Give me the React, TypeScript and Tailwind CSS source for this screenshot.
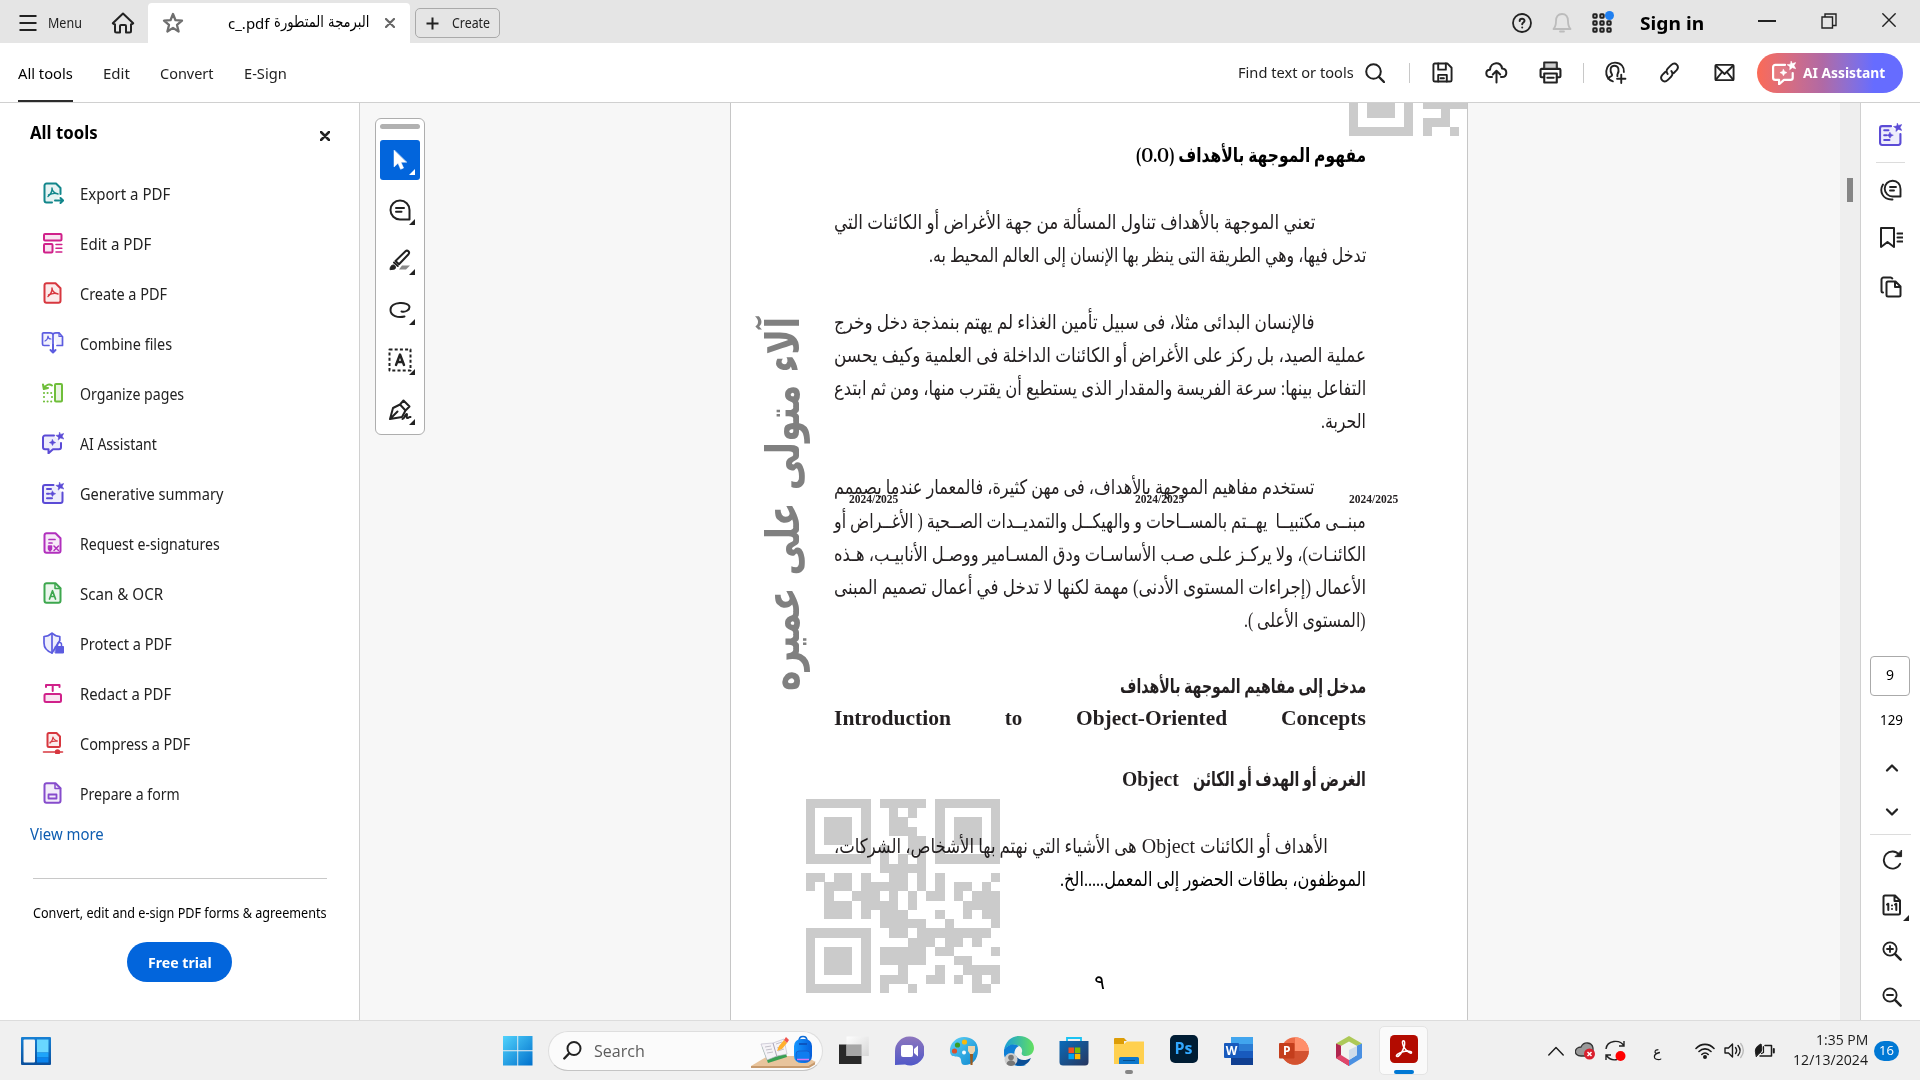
import React, { useLayoutEffect, useRef, useState } from "react";

type FitProps = { w: string; className?: string; children: React.ReactNode; rtl?: boolean };

/* A single line of text whose glyphs are condensed or expanded to the width of its box. */
function Fit({ w, className = "", children, rtl = false }: FitProps) {
  const outer = useRef<HTMLSpanElement>(null);
  const inner = useRef<HTMLSpanElement>(null);
  const [scale, setScale] = useState(1);
  useLayoutEffect(() => {
    if (outer.current && inner.current) {
      setScale(outer.current.clientWidth / inner.current.offsetWidth);
    }
  }, []);
  return (
    <span ref={outer} dir={rtl ? "rtl" : "ltr"} className={`block shrink-0 whitespace-pre ${w} ${className}`}>
      <span
        ref={inner}
        className={`inline-block ${rtl ? "origin-right" : "origin-left"}`}
        style={{ transform: `scaleX(${scale})` }}
      >
        {children}
      </span>
    </span>
  );
}

type IconProps = { children: React.ReactNode; className?: string; sw?: number; box?: string };
function Icon({ children, className = "size-[22px]", sw = 2, box = "0 0 22 22" }: IconProps) {
  return (
    <svg
      viewBox={box}
      className={`shrink-0 ${className}`}
      fill="none"
      stroke="currentColor"
      strokeWidth={sw}
      strokeLinecap="round"
      strokeLinejoin="round"
    >
      {children}
    </svg>
  );
}

const SPARK = "M17.6 0.2l1 2.2 3.2-1-1.6 2.8 1.6 2.9-3.2-1-2.4 2 .2-2.9-2.6-1.8 3-.5z";
const ACRO = "M10 6c.3 3-1 6-4 8.500M10 6c0 3 2 5 6 6M6.500 13c3-1.500 6-2 9-1.300";

function DocIcon({ children }: { children?: React.ReactNode }) {
  return (
    <Icon>
      <path d="M4.500 1.200h9l5 5v12.600a2 2 0 0 1-2 2h-12a2 2 0 0 1-2-2V3.200a2 2 0 0 1 2-2z" fill="currentColor" fillOpacity=".1" />
      {children}
    </Icon>
  );
}

function SummaryIcon({ className = "size-[22px]" }: { className?: string }) {
  return (
    <Icon className={className}>
      <path d="M11.500 3H3a2 2 0 0 0-2 2v14a2 2 0 0 0 2 2h15.500a2 2 0 0 0 2-2v-8.500" fill="currentColor" fillOpacity=".1" />
      <path d="M5 7h4M5 11.700h2M5 16.200h5" />
      <path d="M10.500 9l1 1.700 2.200 1-2.200 1-1 1.800-1-1.800-2-1 2-1z" fill="currentColor" strokeWidth=".5" />
      <path d={SPARK} fill="currentColor" strokeWidth=".5" />
    </Icon>
  );
}

function AssistantIcon({ className = "size-[22px]" }: { className?: string }) {
  return (
    <Icon className={className}>
      <path d="M12 3.500H3a2 2 0 0 0-2 2v9.800a2 2 0 0 0 2 2h3.500v4l4.500-4h6a2 2 0 0 0 2-2V11" fill="currentColor" fillOpacity=".1" />
      <path d="M10.500 7.600l1 2 2.200 1-2.200 1-1 2-1-2-2.200-1 2.200-1z" fill="currentColor" strokeWidth=".5" />
      <path d={SPARK} fill="currentColor" strokeWidth=".5" />
    </Icon>
  );
}

const TOOLS = [
  {
    label: "Export a PDF", w: "w-[90px]", color: "text-[#12868b]",
    icon: (
      <Icon>
        <path d="M10 20.500H4.500a2 2 0 0 1-2-2v-15a2 2 0 0 1 2-2h9.500l4.500 4.500v6" />
        <path d="M3 2h11l4 4v8l-6 6H3z" fill="currentColor" fillOpacity=".1" stroke="none" />
        <path d={ACRO} strokeWidth="1.400" />
        <path d="M13 18.500h8M18.500 16l2.600 2.500-2.600 2.500" />
      </Icon>
    ),
  },
  {
    label: "Edit a PDF", w: "w-[71px]", color: "text-[#d0218a]",
    icon: (
      <Icon>
        <rect x="2" y="2" width="17.500" height="6.500" rx="1" fill="currentColor" fillOpacity=".12" />
        <rect x="2" y="12" width="8.500" height="8.500" rx="1" fill="currentColor" fillOpacity=".12" />
        <path d="M14 12.500h5.800M14 16.200h5.800M14 20h5.800" strokeWidth="1.600" />
      </Icon>
    ),
  },
  { label: "Create a PDF", w: "w-[87px]", color: "text-[#d7373f]", icon: <DocIcon><path d={ACRO} strokeWidth="1.400" /></DocIcon> },
  {
    label: "Combine files", w: "w-[92px]", color: "text-[#5c5ce0]",
    icon: (
      <Icon className="size-[24px]" box="-1 -1 24 24">
        <path d="M7 13.500H2a1.500 1.500 0 0 1-1.500-1.500V1.800A1 1 0 0 1 1.500.8H8c1.600 0 3 1 3 2v8M15 13.500h5.500V4.800l-3.500-4H14c-1.600 0-3 1-3 2" fill="currentColor" fillOpacity=".08" strokeWidth="1.700" />
        <path d="M6 4c0 2-1 4-3 5M6 4c0 2 1 3 3 3M17 1v3.500h3.500" strokeWidth="1.200" />
        <path d="M11 12v8M8.500 18l2.500 2.500 2.500-2.500" />
      </Icon>
    ),
  },
  {
    label: "Organize pages", w: "w-[104px]", color: "text-[#6fbe3a]",
    icon: (
      <Icon>
        <rect x="13" y="2" width="7" height="17.500" rx="1" fill="currentColor" fillOpacity=".15" />
        <path d="M10 3.500C7.500 1.500 4.500 2.500 2.500 5.500" />
        <path d="M1 2.500l.8 4.500L6 6" fill="currentColor" />
        <path d="M2 11h8M2 15v.1M2 19.500h8M10 15v.1" strokeDasharray="0 3.600" strokeWidth="2.100" />
      </Icon>
    ),
  },
  { label: "AI Assistant", w: "w-[77px]", color: "text-[#5b4bd6]", icon: <AssistantIcon /> },
  { label: "Generative summary", w: "w-[143px]", color: "text-[#5b4bd6]", icon: <SummaryIcon /> },
  {
    label: "Request e-signatures", w: "w-[140px]", color: "text-[#b130bd]",
    icon: (
      <DocIcon>
        <path d="M7 7.500h6M7 11h3" strokeWidth="1.700" />
        <path d="M6.500 14h3v3l-1.500 2-1.500-2zM12 14l4.500 4.500M16.500 14L12 18.500" strokeWidth="1.500" fill="currentColor" />
      </DocIcon>
    ),
  },
  {
    label: "Scan & OCR", w: "w-[83px]", color: "text-[#3da74e]",
    icon: (
      <DocIcon>
        <path d="M13 1.500v5h5.500" strokeWidth="1.500" />
        <path d="M7.500 17l3-8.300 3 8.300M8.500 14.500h4" strokeWidth="1.700" />
      </DocIcon>
    ),
  },
  {
    label: "Protect a PDF", w: "w-[92px]", color: "text-[#5c5ce0]",
    icon: (
      <Icon>
        <path d="M17.800 8.500V4.500C15 4.500 12 3 10 1.200 8 3 5 4.500 2 4.500v6.500c0 5 4 8.500 8 10z" fill="currentColor" fillOpacity=".1" strokeWidth="1.700" />
        <path d="M10 1.500V21" strokeWidth="1.700" />
        <path d="M13.500 14.500h8v6.500h-8z" fill="currentColor" strokeWidth="1" />
        <path d="M15.500 14v-1.500a2 2 0 0 1 4 0V14" strokeWidth="1.500" />
      </Icon>
    ),
  },
  {
    label: "Redact a PDF", w: "w-[91px]", color: "text-[#d0218a]",
    icon: (
      <Icon>
        <rect x="2.500" y="12" width="16.500" height="8" rx="1.500" fill="currentColor" fillOpacity=".12" />
        <path d="M4 5V3h13.500v2M10.700 3v6" />
      </Icon>
    ),
  },
  {
    label: "Compress a PDF", w: "w-[110px]", color: "text-[#d7373f]",
    icon: (
      <Icon>
        <path d="M7 1h7.500L18 4.500V14a1 1 0 0 1-1 1H7a1.500 1.500 0 0 1-1.500-1.500v-11A1.500 1.500 0 0 1 7 1z" fill="currentColor" fillOpacity=".1" />
        <path d="M11 5c0 2.500-1 4-3 6M11 5c.5 2.500 2 3.500 4.500 4M8 10.200c2.500-1 4.500-1.300 7-1" strokeWidth="1.200" />
        <path d="M1.500 20h19" strokeWidth="1.600" />
        <circle cx="15.500" cy="20" r="1.700" fill="currentColor" />
      </Icon>
    ),
  },
  {
    label: "Prepare a form", w: "w-[100px]", color: "text-[#864ccc]",
    icon: (
      <DocIcon>
        <path d="M13 1.500v5h5.500" strokeWidth="1.500" />
        <rect x="6.500" y="12.500" width="8" height="4" strokeWidth="1.800" />
      </DocIcon>
    ),
  },
];

const QR = [
  "#######.#####.#######",
  "#.....#..#.#..#.....#",
  "#.###.#..##...#.###.#",
  "#.###.#..###..#.###.#",
  "#.###.#....##.#.###.#",
  "#.....#.#..##.#.....#",
  "#######.#.#.#.#######",
  "........#####........",
  "##.##.#..##.#.#.....#",
  "#.###.#####.#.#.##.#.",
  "..#..###.#.#.##.#.###",
  "..###.####.#.....####",
  "..###.#.###...#..#.##",
  "........#####..#....#",
  "#######..##.########.",
  "#.....#....###.##.#..",
  "#.###.#.#####.##....#",
  "#.###.#.#####...##...",
  "#.###.#...#...#..####",
  "#.....#.###..##.#.#.#",
  "#######.#..#......##.",
];

function QrCode({ className }: { className: string }) {
  return (
    <svg viewBox="0 0 21 21" className={className} shapeRendering="crispEdges" fill="#cbcbcb">
      {QR.flatMap((row, y) =>
        row.split("").map((c, x) => (c === "#" ? <rect key={`${x}-${y}`} x={x} y={y} width="1.010" height="1.010" /> : null)),
      )}
    </svg>
  );
}

const UI = "font-['Noto_Sans',sans-serif]";

function TitleBar() {
  return (
    <div className="flex h-[43px] bg-[#e5e5e5]">
      <div className="flex w-[148px] items-center pt-[3px] pl-[18px] text-[#222]">
        <Icon className="size-5" sw={2} box="0 0 20 20"><path d="M1.500 3h17M1.500 10h17M1.500 17h17" strokeLinecap="butt" /></Icon>
        <Fit w="w-[34px]" className="ml-[10px] -mt-px text-[14px]">Menu</Fit>
        <Icon className="ml-[29px] size-[24px]" box="0 0 24 24" sw={2}>
          <path d="M12 2.500L1.800 12.300 4 13.500V20a1.500 1.500 0 0 0 1.500 1.500H9V15a1 1 0 0 1 1-1h4a1 1 0 0 1 1 1v6.500h3.500A1.500 1.500 0 0 0 20 20v-6.500l2.200-1.200z" />
        </Icon>
      </div>
      <div className="mt-[3px] flex w-[262px] items-center rounded-t-[4px] bg-white pl-[14px]">
        <Icon className="size-[22px] text-[#6e6e6e]" sw={2.300}><path d="M11 2l2.500 6.200 6.500.5-5 4.200 1.600 6.600-5.600-3.600-5.600 3.600L7 12.900 2 8.700l6.500-.5z" /></Icon>
        <span className="ml-[44px] flex items-center gap-[4px] text-black">
          <Fit w="w-[42px]" className="text-[15px]">c_.pdf</Fit>
          <Fit w="w-[95px]" rtl className="-mt-[3px] font-['DejaVu_Sans',sans-serif] text-[16px]">البرمجة المتطورة</Fit>
        </span>
        <Icon className="ml-[16px] size-[10px] text-[#666]" box="0 0 10 10" sw={2.200}><path d="M1 1l8 8M9 1L1 9" /></Icon>
      </div>
      <div className="mt-[8px] ml-[5px] flex h-[30px] w-[85px] items-center rounded-[5px] border border-[#aaa] pl-[10px] text-[#222]">
        <Icon className="size-[13px]" box="0 0 13 13" sw={2}><path d="M6.500.5v12M.5 6.500h12" strokeLinecap="butt" /></Icon>
        <Fit w="w-[38px]" className="ml-[13px] -mt-px text-[14px]">Create</Fit>
      </div>
      <div className="ml-auto flex items-center text-[#222]">
        <Icon className="mt-[3px] size-[20px]" box="0 0 20 20" sw={1.800}>
          <circle cx="10" cy="10" r="9" />
          <path d="M7.700 8c0-3 4.800-3 4.800-.2 0 1.600-2.300 1.800-2.300 3.500M10.200 14.500v.1" strokeWidth="2" />
        </Icon>
        <Icon className="mt-[3px] ml-[20px] size-[20px] text-[#bcbcbc]" box="0 0 20 20" sw={1.800}>
          <path d="M1.500 16h17c-2-2-2.500-4-2.500-8 0-4.500-2-7-6-7S4 3.500 4 8c0 4-.5 6-2.500 8zM8 18.500h4" />
        </Icon>
        <div className="relative ml-[20px] size-[20px] pt-px">
          <Icon className="size-[20px]" box="0 0 20 20" sw={2}>
            {[3, 10, 17].flatMap((y) => [3, 10, 17].map((x) => <rect key={`${x}-${y}`} x={x - 1.700} y={y - 1.700} width="3.400" height="3.400" rx=".6" />))}
          </Icon>
          <span className="absolute -top-[1px] left-[13px] size-[9px] rounded-full bg-[#1f7ff0]" />
        </div>
        <Fit w="w-[64px]" className="ml-[28px] pt-[4px] text-[18px] font-bold text-black">Sign in</Fit>
        <span className="-mt-[2px] ml-[54px] h-[2px] w-[18px] bg-[#222]" />
        <Icon className="-mt-[2px] ml-[45px] size-[16px]" box="0 0 16 16" sw={1.400}><path d="M1 4h10.500v11H1zM4 4V1h11v11.500h-3.500" strokeLinejoin="miter" /></Icon>
        <Icon className="mr-[24px] -mt-[3px] ml-[45px] size-[14px]" box="0 0 14 14" sw={1.400}><path d="M.8.800l12.400 12.400M13.200.8L.8 13.200" /></Icon>
      </div>
    </div>
  );
}

function MenuBar() {
  return (
    <div className="flex h-[60px] border-b border-[#d0d0d0] bg-white text-[#222]">
      <div className="flex pl-[18px] text-[15px] leading-[60px]">
        <div className="h-[59px] border-b-2 border-[#2c2c2c] text-black"><Fit w="w-[55px]">All tools</Fit></div>
        <Fit w="w-[27px]" className="ml-[30px]">Edit</Fit>
        <Fit w="w-[54px]" className="ml-[30px]">Convert</Fit>
        <Fit w="w-[43px]" className="ml-[30px]">E-Sign</Fit>
      </div>
      <div className="ml-auto flex items-center pr-[17px]">
        <Fit w="w-[116px]" className="text-[15px]">Find text or tools</Fit>
        <Icon className="ml-[11px] size-[20px]" box="0 0 20 20"><circle cx="8.500" cy="8.500" r="7.300" /><path d="M14 14l5 5" strokeWidth="2.400" /></Icon>
        <span className="ml-[24px] h-[20px] w-px bg-[#c8c8c8]" />
        <Icon className="ml-[22px] size-[21px]">
          <path d="M3 1.500h13L20.500 6v13a1.500 1.500 0 0 1-1.500 1.500H3A1.500 1.500 0 0 1 1.500 19V3A1.500 1.500 0 0 1 3 1.500z" /><path d="M6.500 1.500V8h8V1.500M6.500 20.500v-7h9v7M9 17h3.500" />
        </Icon>
        <Icon className="ml-[32px] size-[23px]" box="0 0 23 22">
          <path d="M7 15.500H5.500C0 15.500 0 8.500 5 8.300 5.500 0 16.500-.5 17 7c6 .5 5.500 8.500 0 8.500h-1M11.500 21V10M7.800 13l3.700-3.700 3.700 3.700" />
        </Icon>
        <Icon className="ml-[31px] size-[23px]">
          <path d="M5 7.500v-6h12v6M5 15.500H2.500a1 1 0 0 1-1-1v-6a1 1 0 0 1 1-1h17a1 1 0 0 1 1 1v6a1 1 0 0 1-1 1H17" /><path d="M5 12h12v8.500H5zM8 16h6" />
          <path d="M5 2h12v5H5z" fill="#777" fillOpacity=".35" stroke="none" />
        </Icon>
        <span className="ml-[21px] h-[20px] w-px bg-[#c8c8c8]" />
        <Icon className="ml-[20px] size-[23px]" sw={1.800}>
          <path d="M8.500 19.500C-1 17 .5 1.500 10.500 1.500c6 0 9 4.500 8.500 9" /><path d="M4 17c0-2 4-2 3.800-3.500C5 9 6 4.500 10 4.500s5 4.500 2.800 8.500v1.500M16.500 13v8M12.500 17h8" />
        </Icon>
        <Icon className="ml-[32px] size-[21px]">
          <path d="M9 12.500c-3-4 1-6.500 4-9.500 4-4 9 1.500 5.500 5.500l-3 3M13 9.500c3 4-1 6.500-4 9.500-4 4-9-1.500-5.500-5.500l3-3" />
        </Icon>
        <Icon className="ml-[34px] size-[21px]"><rect x="1.500" y="3" width="19" height="16" rx="1" /><path d="M2 4l9 8.500L20 4M2 18.500l6.500-8M20 18.500l-6.500-8" /></Icon>
        <div className="ml-[22px] flex h-[40px] w-[146px] items-center rounded-full bg-linear-to-r from-[#fb6a55] via-[#b069a5] via-45% to-[#666cff] to-80% pl-[15px] text-white">
          <AssistantIcon className="size-[24px]" />
          <Fit w="w-[82px]" className="ml-[7px] text-[15px] font-bold">AI Assistant</Fit>
        </div>
      </div>
    </div>
  );
}

function ToolsPanel() {
  return (
    <aside className="flex w-[360px] shrink-0 flex-col border-r border-[#d0d0d0] bg-white">
      <div className="flex h-[66px] items-start pt-[15px] pl-[30px]">
        <Fit w="w-[68px]" className="text-[18px] leading-[28px] font-bold text-black">All tools</Fit>
        <Icon className="mt-[13px] ml-[222px] size-[10px] text-[#222]" box="0 0 10 10" sw={2.500}><path d="M1 1l8 8M9 1L1 9" /></Icon>
      </div>
      {TOOLS.map((t) => (
        <div key={t.label} className="flex h-[50px] items-center pl-[42px]">
          <span className={`-mt-[2px] flex w-[22px] justify-center ${t.color}`}>{t.icon}</span>
          <Fit w={t.w} className="ml-[16px] text-[15.500px] leading-[24px] text-[#222]">{t.label}</Fit>
        </div>
      ))}
      <Fit w="w-[74px]" className="mt-[3px] ml-[30px] text-[15.500px] leading-[24px] text-[#0d5cb0]">View more</Fit>
      <div className="mt-[32px] ml-[33px] h-px w-[294px] bg-[#c8c8c8]" />
      <Fit w="w-[294px]" className="mt-[24px] ml-[33px] text-[14px] leading-[20px] text-black">Convert, edit and e-sign PDF forms &amp; agreements</Fit>
      <div className="mt-[19px] ml-[127px] flex h-[40px] w-[105px] items-center justify-center rounded-full bg-[#0265dc] text-white">
        <Fit w="w-[64px]" className="text-[15px] font-bold">Free trial</Fit>
      </div>
    </aside>
  );
}

const QUICK = [
  <Icon key="sel" className="size-[20px] text-white" box="0 0 20 20" sw={0.500}><path d="M4 0v17l4-3.700 2.600 6 3-1.300-2.600-5.800h5.500z" fill="currentColor" /></Icon>,
  <Icon key="cmt"><path d="M20.500 20.500H11A9.500 9.500 0 1 1 20.500 11z" /><path d="M7 9h8M7 12.800h5.500" /></Icon>,
  <Icon key="hl"><path d="M10 20.500h7l4-4h-8z" fill="#8a8a8a" stroke="none" /><path d="M6.500 12L16.500 2.200c2-1.700 4.700 1 3 3L10 15.200z" /><path d="M5 13.500l3.800 3.500" /><path d="M1 20.300c0-2.500 1.500-4.300 3.500-4.300s3.500 4.300 0 4.300z" fill="currentColor" strokeWidth="1" /></Icon>,
  <Icon key="draw"><path d="M12.500 12.500c4 1 8-1.500 8-4.500C20 2.500 1.500 2 1.500 11c0 6 7.500 8 14 6.500" /></Icon>,
  <Icon key="txt" className="size-[24px]" box="0 0 24 24"><rect x="1.500" y="1.500" width="21" height="21" strokeDasharray="3 2.200" strokeLinecap="butt" /><path d="M8 17l4-10.500L16 17M9.200 14h5.600" strokeWidth="2.400" /></Icon>,
  <Icon key="sign" className="size-[24px]" box="0 0 24 24"><path d="M2 21l3-11 7-3.500 5.500 6L14 19zM2 21l7.500-7.500M12 6.500l3.500-4 6 6-4 4" /><path d="M14.500 21c2 0 2.500-5 4-5s-1 4 1 4 1-1.500 3-1" /></Icon>,
];

function QuickBar() {
  return (
    <div className="mt-[15px] ml-[15px] flex h-[317px] w-[50px] shrink-0 flex-col items-center rounded-[6px] border border-[#aeaeae] bg-white pt-[5px] text-[#222]">
      <span className="mb-[11px] h-[5px] w-[40px] shrink-0 rounded-full bg-[#b1b1b1]" />
      {QUICK.map((q, i) => (
        <div key={i} className={`relative mb-[10px] flex size-[40px] shrink-0 items-center justify-center rounded-[3px] ${i === 0 ? "bg-[#0265dc] text-white" : "pb-px"}`}>
          {q}
          <svg className="absolute right-[5px] bottom-[5px] size-[6px]" viewBox="0 0 7 7"><path d="M7 0v7H0z" fill="currentColor" /></svg>
        </div>
      ))}
    </div>
  );
}

const AR = "h-[33.2px] leading-[32px] text-[20px]";

function Line({ w, className = "", children }: { w: string; className?: string; children: React.ReactNode }) {
  return <Fit rtl w={w} className={`${AR} ${className}`}>{children}</Fit>;
}

const STAMP = "text-[11.500px] leading-[18px] font-bold text-[#231f20] font-['Liberation_Serif',serif]";

function Page() {
  return (
    <div className="relative ml-[305px] w-[738px] shrink-0 overflow-hidden border-x border-[#c6c6c6] bg-white">
      <div dir="rtl" className="relative flex flex-col items-start pt-[36px] pr-[101px] font-['Liberation_Serif','DejaVu_Sans',serif] text-[#231f20]">
        <Line w="w-[230px]" className="font-bold text-black">مفهوم الموجهة بالأهداف (O.O)</Line>
        <Line w="w-[481px]" className="mt-[34px] mr-[51px]">تعني الموجهة بالأهداف تناول المسألة من جهة الأغراض أو الكائنات التي</Line>
        <Line w="w-[437px]">تدخل فيها، وهي الطريقة التى ينظر بها الإنسان إلى العالم المحيط به.</Line>
        <Line w="w-[481px]" className="mt-[33px] mr-[51px]">فالإنسان البدائى مثلا، فى سبيل تأمين الغذاء لم يهتم بنمذجة دخل وخرج</Line>
        <Line w="w-[532px]">عملية الصيد، بل ركز على الأغراض أو الكائنات الداخلة فى العلمية وكيف يحسن</Line>
        <Line w="w-[532px]">التفاعل بينها: سرعة الفريسة والمقدار الذى يستطيع أن يقترب منها، ومن ثم ابتدع</Line>
        <Line w="w-[45px]">الحربة.</Line>
        <Line w="w-[481px]" className="mt-[33px] mr-[51px]">تستخدم مفاهيم الموجهة بالأهداف، فى مهن كثيرة، فالمعمار عندما يصممم</Line>
        <Line w="w-[532px]">مبنــى مكتبيــا  يهــتم بالمســاحات و والهيكــل والتمديــدات الصــحية ( الأغــراض أو</Line>
        <Line w="w-[532px]">الكائنـات)، ولا يركـز علـى صـب الأساسـات ودق المسـامير ووصـل الأنابيـب، هـذه</Line>
        <Line w="w-[532px]">الأعمال (إجراءات المستوى الأدنى) مهمة لكنها لا تدخل في أعمال تصميم المبنى</Line>
        <Line w="w-[122px]">(المستوى الأعلى ).</Line>
        <Line w="w-[246px]" className="mt-[33px] font-bold">مدخل إلى مفاهيم الموجهة بالأهداف</Line>
        <div dir="ltr" className="-mt-px flex h-[33px] w-[532px] justify-between text-[21px] leading-[33px] font-bold">
          <Fit w="w-[117px]">Introduction</Fit>
          <Fit w="w-[18px]">to</Fit>
          <Fit w="w-[151px]">Object-Oriented</Fit>
          <Fit w="w-[85px]">Concepts</Fit>
        </div>
        <div className="mt-[28px] flex gap-[14px] font-bold">
          <Line w="w-[173px]">الغرض أو الهدف أو الكائن</Line>
          <Line w="w-[57px]">Object</Line>
        </div>
        <div className="mt-[33px] mr-[38px] flex gap-[5px]">
          <Line w="w-[128px]">الأهداف أو الكائنات</Line>
          <Line w="w-[53px]">Object</Line>
          <Line w="w-[303px]">هى الأشياء التي نهتم بها الأشخاص، الشركات،</Line>
        </div>
        <Line w="w-[306px]" className="text-black">الموظفون، بطاقات الحضور إلى المعمل.....الخ.</Line>
        <span className="mt-[70px] mr-[261px] h-[33px] text-[20px] leading-[33px] text-black">٩</span>
      </div>
      <QrCode className="absolute -top-[160px] left-[618px] size-[193px] mix-blend-multiply" />
      <QrCode className="absolute top-[696px] left-[75px] size-[194px] mix-blend-multiply" />
      <div className={`absolute top-[387px] left-[118px] ${STAMP}`}><Fit w="w-[49px]">2024/2025</Fit></div>
      <div className={`absolute top-[387px] left-[404px] ${STAMP}`}><Fit w="w-[49px]">2024/2025</Fit></div>
      <div className={`absolute top-[387px] left-[618px] ${STAMP}`}><Fit w="w-[49px]">2024/2025</Fit></div>
      <div className="absolute top-[588px] left-[22px] h-[60px] w-[374px] origin-top-left -rotate-90 font-['DejaVu_Sans',sans-serif] text-[46px] leading-[60px] font-bold text-[#808080]">
        <Fit rtl w="w-[374px]">آلاء متولى على عميره</Fit>
      </div>
    </div>
  );
}

function RightRail() {
  return (
    <div className="flex w-[60px] flex-col items-center border-l border-[#d0d0d0] bg-white text-[#222]">
      <div className="mt-[20px] text-[#5b4bd6]"><SummaryIcon className="size-[23px]" /></div>
      <span className="mt-[16px] h-px w-[29px] bg-[#dcdcdc]" />
      <Icon className="mt-[16px] size-[22px]" sw={1.900}><path d="M20.500 17.500H13A7.900 7.900 0 1 1 20.500 10z" /><path d="M10 8h6M10 11.500h4M3 5.500C-1 12 2.500 21 12.500 20.500" /></Icon>
      <Icon className="mt-[25px] size-[24px]" box="0 0 24 24"><path d="M2 2h13v19l-6.500-5L2 21zM18.500 7.500h5M18.500 11.500h5M18.500 15.500h5" /></Icon>
      <Icon className="mt-[26px] size-[22px]"><path d="M8.500 5.500h7l5 5V19a1.500 1.500 0 0 1-1.500 1.500H8A1.500 1.500 0 0 1 6.500 19V7A1.500 1.500 0 0 1 8 5.500zM15 6v5h5M3 16.500A1.500 1.500 0 0 1 1.500 15V3.500A2 2 0 0 1 3.500 1.500h7a2 2 0 0 1 1.800 1" /></Icon>
      <span className="mt-[358px] mr-px flex h-[40px] w-[40px] items-center justify-center rounded-[4px] border border-[#aaa] pb-[4px] text-[14px] text-black">9</span>
      <Fit w="w-[23px]" className="mt-[14px] ml-[2px] text-[14px] leading-[20px] text-black">129</Fit>
      <Icon className="mt-[31px] ml-[2px] size-[14px]" box="0 0 14 14" sw={2.300}><path d="M2 9.500l5-5 5 5" /></Icon>
      <Icon className="mt-[30px] ml-[2px] size-[14px]" box="0 0 14 14" sw={2.300}><path d="M2 4.500l5 5 5-5" /></Icon>
      <span className="mt-[15px] h-px w-[41px] bg-[#dcdcdc]" />
      <Icon className="mt-[14px] ml-[3px] size-[21px]"><path d="M19 15.500A9 9 0 1 1 18 6" /><path d="M20.500 1.500v6.500h-6.500z" fill="currentColor" strokeWidth="1" /></Icon>
      <div className="relative mt-[24px] ml-[3px]">
        <Icon><path d="M4 1.500h10l5 5V19a1.500 1.500 0 0 1-1.500 1.500H4A1.500 1.500 0 0 1 2.500 19V3A1.500 1.500 0 0 1 4 1.500zM13.500 2v5H19" /><path d="M6 10.500l1.300-.8V16M14 10.500l1.300-.8V16M11 11.500v.1M11 15v.1" /></Icon>
        <svg className="absolute -right-[6px] -bottom-[5px] size-[6px]" viewBox="0 0 7 7"><path d="M7 0v7H0z" fill="currentColor" /></svg>
      </div>
      <Icon className="mt-[25px] ml-[3px] size-[20px]"><circle cx="8.800" cy="8.800" r="7.300" /><path d="M14.500 14.500l6 6" strokeWidth="2.800" /><path d="M5.500 8.800h6.600M8.800 5.500v6.600" /></Icon>
      <Icon className="mt-[26px] ml-[3px] size-[20px]"><circle cx="8.800" cy="8.800" r="7.300" /><path d="M14.500 14.500l6 6" strokeWidth="2.800" /><path d="M5.500 8.800h6.600" /></Icon>
    </div>
  );
}

function TaskIcon({ children }: { children: React.ReactNode }) {
  return <div className="flex w-[55px] shrink-0 items-center justify-center"><svg viewBox="0 0 30 30" className="size-[30px]">{children}</svg></div>;
}

function Taskbar() {
  return (
    <div className="flex h-[60px] items-center border-t border-[#dcdcdc] bg-[#f0f0f0] font-['Open_Sans','Noto_Sans',sans-serif]">
      <svg viewBox="0 0 30 28" className="ml-[21px] h-[28px] w-[30px]">
        <defs>
          <linearGradient id="wg" x1="0" y1="0" x2="0" y2="1"><stop offset="0" stopColor="#1780d4" /><stop offset="1" stopColor="#0a4f9c" /></linearGradient>
        </defs>
        <rect width="30" height="28" rx="1" fill="url(#wg)" />
        <rect x="2.500" y="2.500" width="11.500" height="23" rx="1" fill="#f4f4f4" />
        <rect x="16" y="2.500" width="11.500" height="13" fill="#69d6ff" />
        <rect x="16" y="15.500" width="11.500" height="5" fill="#1ea4fa" />
        <rect x="16" y="20.500" width="11.500" height="5" fill="#0a84ee" />
      </svg>
      <svg viewBox="0 0 30 30" className="ml-[452px] size-[30px]">
        <defs>
          <linearGradient id="st" x1="0" y1="0" x2="1" y2="1"><stop offset="0" stopColor="#52d3fc" /><stop offset="1" stopColor="#0070cc" /></linearGradient>
        </defs>
        <path d="M0 0h14.300v14.300H0zM15.200 0h14.300v14.300H15.200zM0 15.200h14.300v14.300H0zM15.200 15.200h14.300v14.300H15.200z" fill="url(#st)" />
      </svg>
      <div className="relative ml-[15px] flex h-[40px] w-[275px] items-center rounded-full border border-[#dedede] border-b-[#c4c4c4] bg-[#fbfbfb] pl-[14px]">
        <Icon className="size-[19px] text-[#222]" box="0 0 19 19"><circle cx="11" cy="7.500" r="6.500" /><path d="M6 12.500L1.300 17.500" strokeWidth="2.400" /></Icon>
        <Fit w="w-[51px]" className="ml-[12px] text-[17px] text-[#5c5c5c]">Search</Fit>
        <svg viewBox="0 0 65 34" className="absolute right-[6px] bottom-[1px] h-[34px] w-[65px]">
          <defs><linearGradient id="bp" x1="0" y1="0" x2="1" y2="0"><stop offset="0" stopColor="#1597ff" /><stop offset="1" stopColor="#0560dd" /></linearGradient></defs>
          <path d="M0 31L17 21h36l12 6-8 4z" fill="#e8c49c" /><path d="M0 31h57l7-4v2.500L58 33H0z" fill="#c79a6d" />
          <path d="M11 12l21-5 4 15-19 6z" fill="#39a053" /><path d="M10 9l12-1 11-4 3 15-10 2-10 4z" fill="#f5f3f7" stroke="#b9b5c6" strokeWidth=".6" />
          <path d="M22 8l4 14" stroke="#a9a5b8" /><path d="M14 12l6-1M15 15l6-1M16 18l6-1M25 9l6-2M26 13l6-2M27 16l6-2" stroke="#b5b2bd" strokeWidth=".8" />
          <path d="M26 16l2-5 5-6 3 3-5 6z" fill="#ffb02e" /><path d="M33 5l2-3 3 3-2 3z" fill="#f2554e" />
          <path d="M48 6c0-6 8-6 8 0" fill="none" stroke="#0a6bd8" strokeWidth="1.500" />
          <rect x="43" y="4" width="18" height="24" rx="7" fill="url(#bp)" /><rect x="45" y="16" width="14" height="10" rx="3" fill="#0f7df0" stroke="#1b50b8" strokeWidth=".6" />
          <path d="M46 24.500h12" stroke="#d678f5" strokeWidth="1.500" /><path d="M48 9h8" stroke="#0b55c0" strokeWidth="2" />
        </svg>
      </div>
      <div className="ml-[3px] flex h-full items-center">
        <TaskIcon><defs><linearGradient id="tv" x1="0" y1="0" x2="1" y2="1"><stop offset="0" stopColor="#fff" /><stop offset="1" stopColor="#d4d4d4" /></linearGradient></defs><path d="M0 8.500h22.500V28H0z" fill="#292929" /><path d="M7.500 0.500h22.300V20H7.500z" fill="url(#tv)" fillOpacity=".9" /><path d="M7.500 8.500h15V20h-15z" fill="#a6a6a6" /></TaskIcon>
        <TaskIcon><defs><linearGradient id="ch" x1="0" y1="0" x2="0" y2="1"><stop offset="0" stopColor="#8d76bd" /><stop offset="1" stopColor="#5058c8" /></linearGradient></defs><path d="M15 .5a14.500 14.500 0 1 1-4 28l-10 .5V15A14.500 14.500 0 0 1 15 .5z" fill="url(#ch)" /><rect x="7" y="9" width="12" height="12" rx="2" fill="#fff" /><path d="M20 13l4-3.500v11L20 17z" fill="#fff" /></TaskIcon>
        <TaskIcon><defs><linearGradient id="pa" x1="0" y1="0" x2="1" y2="1"><stop offset="0" stopColor="#5fd3f7" /><stop offset="1" stopColor="#0c86cf" /></linearGradient></defs><path d="M1 16C0 7 8 1 15 1c8 0 14 5 14 13 0 10-6 15-13 15-6 0-2-6-6-8-3-1-8 1-9-5z" fill="url(#pa)" /><circle cx="5.500" cy="15" r="2.600" fill="#d9512c" /><circle cx="8.500" cy="9" r="2.600" fill="#3a9d23" /><circle cx="15.500" cy="6" r="2.600" fill="#f7b90f" /><circle cx="15" cy="16.500" r="2" fill="#f4fbff" /><path d="M19 10h7v5l-2 3h-3l-2-3z" fill="#ead3ae" /><path d="M21 18h3l-.5 11h-2z" fill="#9c5a1e" /></TaskIcon>
        <TaskIcon><defs><linearGradient id="ed" x1="0" y1="0" x2="1" y2="0"><stop offset="0" stopColor="#189ddb" /><stop offset="1" stopColor="#63e05f" /></linearGradient></defs><path d="M0 15C1 5 8 0 15 0c9 0 15 6 15 12 0 5-4 8-8 8-4 0-5-2-4-4 1-4-3-8-9-7-4 0-7 2-9 6z" fill="url(#ed)" /><path d="M0 14c3-5 10-7 15-4-5 2-6 9-3 14 2 3 6 5 10 5-12 4-24-4-22-15z" fill="#0f7fd6" /><path d="M12 20c3 5 10 5 15 2-3 7-9 9-15 7-4-3-4-7 0-9z" fill="#0b4f96" /><circle cx="7" cy="23.500" r="6.500" fill="#cfcfcf" /><circle cx="7" cy="21.500" r="2.800" fill="#777" /><path d="M2.500 28c1-5 8-5 9 0-2.500 2.500-6.500 2.500-9 0z" fill="#777" /></TaskIcon>
        <TaskIcon><defs><linearGradient id="sr" x1="0" y1="0" x2="1" y2="1"><stop offset="0" stopColor="#0a6cba" /><stop offset="1" stopColor="#27365f" /></linearGradient></defs><path d="M8 6V2h14v4" fill="none" stroke="#1bc3f3" strokeWidth="1.800" /><path d="M.5 5h29v21a3.500 3.500 0 0 1-3.500 3.500H4A3.500 3.500 0 0 1 .5 26z" fill="url(#sr)" /><path d="M9.500 11.500H15V17H9.500z" fill="#f25022" /><path d="M15.800 11.500h5.500V17h-5.500z" fill="#7fba00" /><path d="M9.500 17.800H15v5.400H9.500z" fill="#00a4ef" /><path d="M15.800 17.800h5.500v5.400h-5.500z" fill="#ffb900" /></TaskIcon>
        <div className="relative flex h-full w-[55px] items-center justify-center">
          <svg viewBox="0 0 30 30" className="size-[30px]"><path d="M0 3a1 1 0 0 1 1-1h9l3 3h-3v5H0z" fill="#dd9d07" /><path d="M0 8h10l3-2.500h17V28H0z" fill="#ffd04f" /><path d="M5 28v-5.500A1.500 1.500 0 0 1 6.500 21h17a1.500 1.500 0 0 1 1.500 1.500V28z" fill="#0c77cc" /><path d="M9 24.500h12" stroke="#064e8c" /></svg>
          <span className="absolute bottom-[6px] h-[4px] w-[8px] rounded-full bg-[#868686]" />
        </div>
        <div className="flex w-[55px] justify-center"><span className="mb-[4px] flex size-[28px] items-center justify-center rounded-[5px] bg-[#001d34] pb-[2px] text-[16px] font-bold text-[#31a8ff]">Ps</span></div>
        <TaskIcon><path d="M7 1h22v7H7z" fill="#41a5ee" /><path d="M7 8h22v7H7z" fill="#2b7cd3" /><path d="M7 15h22v7H7z" fill="#185abd" /><path d="M7 22h22v7H7z" fill="#103f91" /><rect y="7" width="15" height="15" rx="1" fill="#185abd" /><text x="7.500" y="18.800" fontSize="12" fontWeight="bold" textAnchor="middle" fill="#fff">W</text></TaskIcon>
        <TaskIcon><circle cx="16" cy="15" r="13.800" fill="#ed6c47" /><path d="M16 1.200A13.800 13.800 0 0 1 29.800 15H16z" fill="#ff8f6b" /><path d="M2.200 15h27.600a13.800 13.800 0 0 1-27.600 0z" fill="#d35230" /><rect y="7" width="15.500" height="15.500" rx="1" fill="#c43e1c" /><text x="7.700" y="19" fontSize="12" fontWeight="bold" textAnchor="middle" fill="#fff">P</text></TaskIcon>
        <TaskIcon><path d="M15 0l13 7.500L15 13 2 7.500z" fill="#adc957" /><path d="M2 7.500L15 13v17L2 22z" fill="#b0264f" /><path d="M2 22l6-4 7 5v7z" fill="#e0476a" /><path d="M28 7.500L15 13v17l13-8z" fill="#4a90e2" /><path d="M15 5.500l8 4.500v9l-8 5-8-5v-9z" fill="#f2f4ef" /><path d="M15 14v10l8-5v-9z" fill="#cfdcea" /></TaskIcon>
        <div className="relative flex h-full w-[55px] items-center justify-center">
          <span className="flex h-[49px] w-[49px] items-center justify-center rounded-[5px] border border-[#e4e4e4] bg-[#fafafa] pb-[3px]">
            <svg viewBox="0 0 28 28" className="size-[28px]"><rect width="28" height="28" rx="4.500" fill="#b30b00" /><path d="M13 6c2-1 2 3 1 6-1.500 5-5 10-7 9.500s1-3.500 6-4.800c4-1 9-.8 8.500 1S16 16 13.500 11.500C12.500 9 12.200 6.500 13 6z" fill="none" stroke="#fff" strokeWidth="1.500" /></svg>
          </span>
          <span className="absolute bottom-[6px] h-[4px] w-[20px] rounded-full bg-[#0078d4]" />
        </div>
      </div>
      <div className="ml-auto flex items-center pr-[21px] text-[#1b1b1b]">
        <Icon className="size-[16px]" box="0 0 16 16" sw={1.400}><path d="M.8 12L8 4.500l7.200 7.500" /></Icon>
        <svg viewBox="0 0 21 18" className="ml-[11px] h-[18px] w-[21px]"><path d="M6 14c-8 0-7-9 0-9 3-6 11-5 12 1v8z" fill="#9a9a9a" stroke="#333" strokeWidth="1.300" /><circle cx="14.500" cy="12" r="5.500" fill="#d9202e" /><path d="M12.500 10l4 4M16.500 10l-4 4" stroke="#fff" strokeWidth="1.500" /></svg>
        <svg viewBox="0 0 21 21" className="ml-[9px] size-[21px]"><path d="M1 9C2 0 15-1 19 6M19 1v5h-5M1 20v-5h5M1.500 15.500C4 19 8 20.500 12 19.500" fill="none" stroke="#222" strokeWidth="1.400" /><circle cx="15.500" cy="16" r="5" fill="#f00" /></svg>
        <span className="ml-[27px] w-[9px] pt-[4px] font-['DejaVu_Sans',sans-serif] text-[14px]">ع</span>
        <Icon className="ml-[33px] size-[20px]" box="0 0 20 20" sw={1.600}><path d="M1 7.500C6 2 14 2 19 7.500M4 10.500c3.500-3.500 8.500-3.500 12 0M6.800 13.500c2-2 4.500-2 6.400 0" /><circle cx="10" cy="16" r="1.200" fill="currentColor" /></Icon>
        <Icon className="ml-[9px] size-[21px]" box="0 0 21 20" sw={1.400}><path d="M1 7.500h3.500l4-4v13l-4-4H1zM11.500 7c1.500 2 1.500 4 0 6M14 5c2.500 3 2.500 7 0 10" /><path d="M16.700 3c3.500 4 3.500 10 0 14" stroke="#bbb" /></Icon>
        <Icon className="ml-[9px] size-[21px]" box="0 0 21 20" sw={1.500}><path d="M11 5h6.500v10.500H6" /><path d="M19.800 8.500v3.500" strokeWidth="2" /><path d="M1.500 12c-1-4 2-7 5.500-8.500C8.500 8 8 12 4.500 13.500L2.500 16z" fill="currentColor" strokeWidth="1" /><path d="M9.500 6v6l-2 1" strokeWidth="1.200" /></Icon>
        <div className="mb-[2px] ml-[18px] flex w-[75px] flex-col items-end text-[14.500px] leading-[20px]">
          <Fit w="w-[52px]">1:35 PM</Fit>
          <Fit w="w-[75px]">12/13/2024</Fit>
        </div>
        <span className="ml-[6px] flex h-[20px] w-[25px] items-center justify-center rounded-full bg-[#0078d4] text-[13px] text-white">16</span>
      </div>
    </div>
  );
}

export default function App() {
  return (
    <div className={`flex h-[1080px] w-[1920px] flex-col overflow-hidden bg-white ${UI}`}>
      <TitleBar />
      <MenuBar />
      <div className="flex h-[917px] bg-[#f7f7f7]">
        <ToolsPanel />
        <QuickBar />
        <Page />
        <div className="ml-auto flex w-[20px] justify-center bg-[#eee]"><span className="mt-[75px] h-[24px] w-[6px] bg-[#858585]" /></div>
        <RightRail />
      </div>
      <Taskbar />
    </div>
  );
}
